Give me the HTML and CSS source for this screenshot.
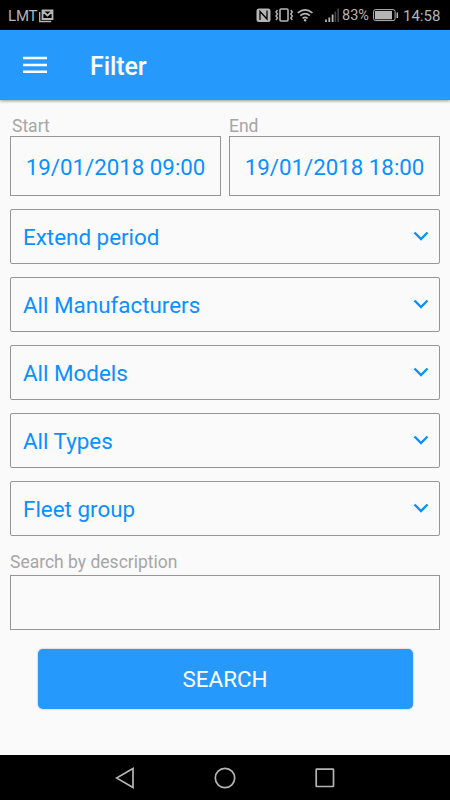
FILE: index.html
```html
<!DOCTYPE html>
<html lang="en">
<head>
<meta charset="utf-8">
<title>Filter</title>
<link rel="stylesheet" href="styles.css">
</head>
<body>
<div class="status">
  <span class="carrier">LMT</span>
  <svg class="mail" width="16" height="14" viewBox="0 0 16 14"><path d="M1.700 3v9.500h11.500" fill="none" stroke="#b5b5b5" stroke-width="1.300"/><path d="M4.500 1.500h10v8.500h-10zM4.500 2l5 4.500 5-4.500" fill="none" stroke="#b5b5b5" stroke-width="1.800"/></svg>
  <svg class="indicators" width="86" height="18" viewBox="254 6 86 18">
    <rect x="256.500" y="8.500" width="14" height="13.500" rx="2.500" fill="#b5b5b5"/>
    <path d="M260 20v-8.500l7 7.500v-8.500" fill="none" stroke="#000" stroke-width="1.300"/>
    <rect x="280" y="9" width="8" height="12" rx="1" fill="none" stroke="#b5b5b5" stroke-width="1.600"/>
    <path d="M277.500 10l-1.500 2 1.500 2-1.500 2 1.500 2-1.500 2M290.800 10l1.500 2-1.500 2 1.500 2-1.500 2 1.500 2" fill="none" stroke="#b5b5b5" stroke-width="1.400"/>
    <path d="M297.800 12.800q7.300-6 14.600 0M300.300 15.700q4.800-4 9.600 0M302.600 18.300q2.500-2 5 0" fill="none" stroke="#b5b5b5" stroke-width="1.700"/>
    <circle cx="305.100" cy="20.300" r="1.200" fill="#b5b5b5"/>
    <path d="M326 19.500V22M329.300 17.500V22M332.600 14.500V22" stroke="#b5b5b5" stroke-width="1.800"/>
    <path d="M335.400 11.500V22M338.200 8.500V22" stroke="#444" stroke-width="1.600"/>
  </svg>
  <span class="percent">83%</span>
  <svg class="battery" width="26" height="13" viewBox="0 0 26 13"><rect x=".6" y=".6" width="21.500" height="11" rx="2" fill="none" stroke="#b5b5b5"/><rect x="2" y="2" width="17" height="8.300" fill="#b5b5b5"/><path d="M24.300 3.500v5.500" stroke="#b5b5b5" stroke-width="1.600"/></svg>
  <span class="clock">14:58</span>
</div>
<header class="appbar">
  <svg width="24" height="18" viewBox="0 0 24 18"><path d="M0 2h24M0 9h24M0 15.700h24" stroke="#fff" stroke-width="2.500"/></svg>
  <h1>Filter</h1>
</header>
<main>
  <div class="dates">
    <div><label>Start</label><div class="date">19/01/2018 09:00</div></div>
    <div><label class="end">End</label><div class="date">19/01/2018 18:00</div></div>
  </div>
  <div class="selects">
    <div class="select"><span>Extend period</span><svg width="16" height="10" viewBox="0 0 16 10"><path d="M1.500 1.500L8 8l6.500-6.500"/></svg></div>
    <div class="select"><span>All Manufacturers</span><svg width="16" height="10" viewBox="0 0 16 10"><path d="M1.500 1.500L8 8l6.500-6.500"/></svg></div>
    <div class="select"><span>All Models</span><svg width="16" height="10" viewBox="0 0 16 10"><path d="M1.500 1.500L8 8l6.500-6.500"/></svg></div>
    <div class="select"><span>All Types</span><svg width="16" height="10" viewBox="0 0 16 10"><path d="M1.500 1.500L8 8l6.500-6.500"/></svg></div>
    <div class="select"><span>Fleet group</span><svg width="16" height="10" viewBox="0 0 16 10"><path d="M1.500 1.500L8 8l6.500-6.500"/></svg></div>
  </div>
  <label class="desc">Search by description</label>
  <div class="input"></div>
  <div class="button">SEARCH</div>
</main>
<nav>
  <svg width="20" height="22" viewBox="0 0 20 22"><path d="M18 1.500v19L1.500 11z"/></svg>
  <svg width="22" height="22" viewBox="0 0 22 22"><circle cx="11" cy="11" r="9.700"/></svg>
  <svg width="20" height="20" viewBox="0 0 20 20"><rect x="1.200" y="1.200" width="17.300" height="17.300" rx=".5"/></svg>
</nav>
</body>
</html>
```
FILE: styles.css
```css
* { box-sizing: border-box; }
body {
  margin: 0;
  width: 450px;
  height: 800px;
  display: flex;
  flex-direction: column;
  overflow: hidden;
  background: #fafafa;
  font-family: Roboto, "Liberation Sans", sans-serif;
}
svg { display: block; flex: none; }
.status {
  height: 30px;
  flex: none;
  display: flex;
  align-items: center;
  padding: 0 10px 0 8px;
  background: #000;
  color: #b5b5b5;
  font-size: 15px;
  line-height: 30px;
}
.carrier { width: 30px; padding-top: 2px; letter-spacing: -.2px; }
.mail { margin-top: 1px; }
.indicators { margin-left: auto; }
.percent { width: 31px; margin-left: 2px; font-size: 14.5px; padding-top: 1px; }
.clock { width: 37px; margin-left: 4px; padding-top: 2px; }
.appbar {
  height: 70px;
  flex: none;
  display: flex;
  align-items: center;
  padding-left: 23px;
  background: #2699fd;
  color: #fff;
  box-shadow: 0 1px 3px rgba(0, 0, 0, .4);
}
.appbar h1 {
  margin: 3px 0 0 43px;
  font-size: 25px;
  line-height: 30px;
  font-weight: 500;
  letter-spacing: -.1px;
}
main {
  flex: 1;
  display: flex;
  flex-direction: column;
  padding: 15px 10px 0;
}
.dates {
  display: grid;
  grid-template-columns: 211px 211px;
  justify-content: space-between;
}
label {
  display: block;
  height: 21px;
  padding-left: 2px;
  color: #a6a6a6;
  font-size: 17.5px;
  line-height: 22px;
}
label.end { padding-left: 0; }
.date {
  height: 60px;
  border: 1px solid #969696;
  color: #0b90ff;
  font-size: 22.3px;
  line-height: 61px;
  text-align: center;
}
.selects {
  display: grid;
  gap: 13px;
  margin-top: 13px;
}
.select {
  height: 55px;
  display: flex;
  align-items: center;
  justify-content: space-between;
  padding: 0 10px 0 12px;
  border: 1px solid #969696;
  border-radius: 2px;
  color: #0b90ff;
  font-size: 22.4px;
}
.select span { line-height: 26px; }
.select svg { margin-top: -1px; }
.select path { fill: none; stroke: #0b90ff; stroke-width: 2.4; }
label.desc { margin-top: 15px; height: 24px; padding-left: 0; }
.input { height: 55px; border: 1px solid #969696; }
.button {
  width: 375px;
  height: 60px;
  margin: 19px 0 0 27.5px;
  border-radius: 5px;
  background: #2699fd;
  box-shadow: 0 0 2px rgba(0, 0, 0, .35);
  color: #fff;
  font-size: 22.4px;
  line-height: 61px;
  text-align: center;
}
nav {
  height: 45px;
  flex: none;
  display: flex;
  align-items: center;
  justify-content: space-between;
  padding: 0 115px;
  background: #000;
}
nav svg { fill: none; stroke: #b5b5b5; stroke-width: 1.7; }
```
